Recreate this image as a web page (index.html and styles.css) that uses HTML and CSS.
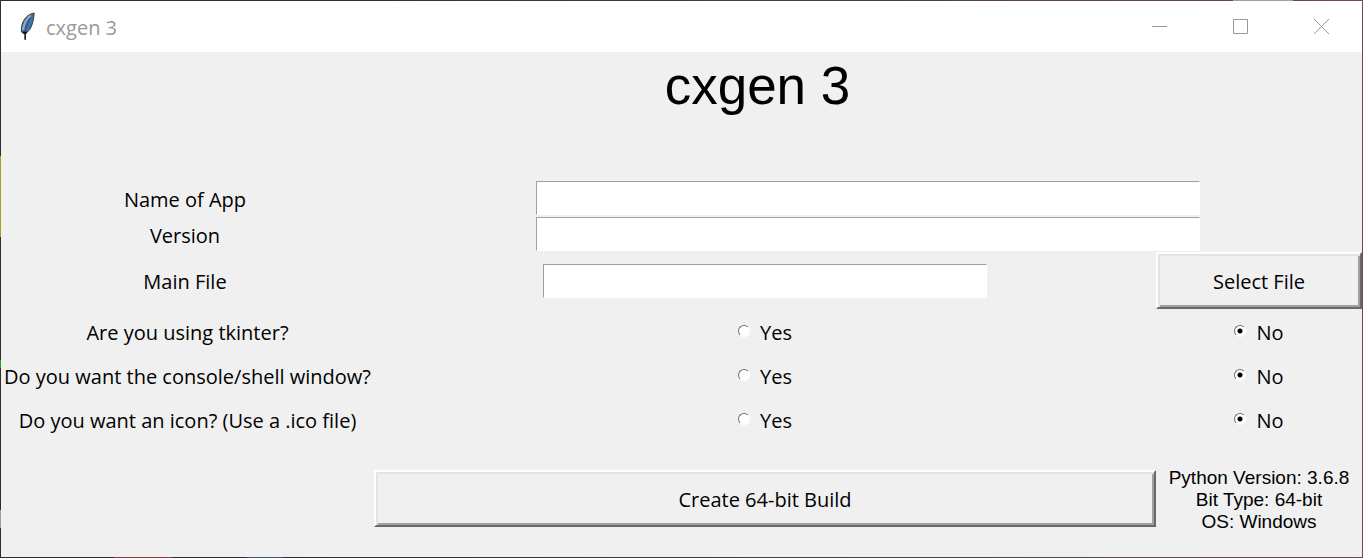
FILE: index.html
```
<!DOCTYPE html>
<html lang="en">
<head>
<meta charset="utf-8">
<title>cxgen 3</title>
<link rel="stylesheet" href="styles.css">
</head>
<body>
<div class="window">
  <header class="titlebar">
    <svg class="feather" width="16" height="30" viewBox="0 0 16 30" aria-hidden="true">
      <path d="M15.200 1C11 1.500 6 5 4 10C2.500 13.500 2 17 2.500 20L5 21.500L8.500 20C12 17 13 13 14 9C14.500 6 15.200 4 15.200 1Z" fill="#3f73b0" stroke="#3a3f45"/>
      <path d="M14 2.500C10 7 7.500 13 6 20" fill="none" stroke="#26486f" stroke-width=".8"/>
      <path d="M12 3.500C8 6 5 11 4 18" fill="none" stroke="#a3a9ad" stroke-width="2"/>
      <path d="M3.500 20L8 20L6.500 22.500V27.500H5.800V22.500Z" fill="#111" stroke="#111" stroke-width=".8"/>
    </svg>
    <span class="caption">cxgen 3</span>
    <div class="controls">
      <button class="control" type="button" aria-label="Minimize"><svg width="15" height="15" viewBox="0 0 15 15"><path d="M0 7.500H15"/></svg></button>
      <button class="control" type="button" aria-label="Maximize"><svg width="15" height="15" viewBox="0 0 15 15"><path d="M.5.5H14.500V14.500H.5Z"/></svg></button>
      <button class="control" type="button" aria-label="Close"><svg width="15" height="15" viewBox="0 0 15 15"><path d="M0 0L15 15M15 0L0 15"/></svg></button>
    </div>
  </header>
  <form class="form">
    <div class="row heading-row"><h1 class="heading">cxgen 3</h1></div>
    <div class="row entry-row">
      <label class="prompt field-prompt" for="app-name">Name of App</label>
      <input class="entry wide" id="app-name" type="text">
    </div>
    <div class="row entry-row">
      <label class="prompt field-prompt" for="version">Version</label>
      <input class="entry wide" id="version" type="text">
    </div>
    <div class="row">
      <label class="prompt field-prompt" for="main-file">Main File</label>
      <input class="entry" id="main-file" type="text">
      <button class="push" type="button">Select File</button>
    </div>
    <div class="row choice-row" role="radiogroup" aria-labelledby="q-tk">
      <span class="prompt" id="q-tk">Are you using tkinter?</span>
      <label class="choice"><input class="radio" type="radio" name="tk"><span class="prompt">Yes</span></label>
      <label class="choice"><input class="radio" type="radio" name="tk" checked><span class="prompt">No</span></label>
    </div>
    <div class="row choice-row" role="radiogroup" aria-labelledby="q-console">
      <span class="prompt" id="q-console">Do you want the console/shell window?</span>
      <label class="choice"><input class="radio" type="radio" name="console"><span class="prompt">Yes</span></label>
      <label class="choice"><input class="radio" type="radio" name="console" checked><span class="prompt">No</span></label>
    </div>
    <div class="row choice-row" role="radiogroup" aria-labelledby="q-icon">
      <span class="prompt" id="q-icon">Do you want an icon? (Use a .ico file)</span>
      <label class="choice"><input class="radio" type="radio" name="icon"><span class="prompt">Yes</span></label>
      <label class="choice"><input class="radio" type="radio" name="icon" checked><span class="prompt">No</span></label>
    </div>
    <div class="row build-row">
      <button class="push build" type="button">Create 64-bit Build</button>
      <p class="info">Python Version: 3.6.8<br>Bit Type: 64-bit<br>OS: Windows</p>
    </div>
  </form>
</div>
</body>
</html>
```

FILE: styles.css
```
* {
  box-sizing: border-box;
}

body {
  margin: 0;
  min-height: 100vh;
  padding: 1px;
  display: flex;
  background:
    linear-gradient(#a9a020, #a9a020) 0 156px / 1px 81px no-repeat,
    linear-gradient(#2ca02c, #2ca02c) 0 360px / 1px 8px no-repeat,
    linear-gradient(#a0a0a0, #a0a0a0) 0 510px / 1px 18px no-repeat,
    linear-gradient(#a0a0a0, #a0a0a0) 1233px 0 / 60px 1px no-repeat,
    linear-gradient(#a03038, #a03038) 114px 100% / 58px 1px no-repeat,
    linear-gradient(#3c5488, #3c5488) 247px 100% / 36px 1px no-repeat,
    linear-gradient(90deg, #302d30 20%, #6e4a55);
  font-family: "Open Sans", "Noto Sans", sans-serif;
  font-size: 20px;
  color: #000;
}

.window {
  flex: 1;
  display: flex;
  flex-direction: column;
  background: #f0f0f0;
}

.titlebar {
  height: 51px;
  display: flex;
  align-items: center;
  padding-left: 18px;
  background: #fff;
  color: #999;
}

.caption {
  margin-left: 11px;
  padding-top: 2px;
}

.controls {
  display: flex;
  margin-left: auto;
}

.control {
  width: 81px;
  height: 51px;
  display: grid;
  place-items: center;
  padding: 0;
  border: 0;
  background: none;
}

.control path {
  fill: none;
  stroke: #999;
}

.form {
  flex: 1;
}

.row {
  display: grid;
  grid-template-columns: 373px 1fr 206px;
  align-items: center;
  justify-items: center;
  line-height: 28px;
}

.heading-row {
  height: 128px;
  align-items: start;
}

.heading {
  grid-column: 2;
  margin: 4px 15px 0 0;
  font: 53px/60px "Liberation Sans", Arial, sans-serif;
}

.entry-row {
  height: 36px;
}

.prompt {
  padding-top: 3px;
}

.field-prompt {
  padding-right: 5px;
}

.entry {
  width: 444px;
  max-width: 100%;
  height: 34px;
  padding: 0 4px;
  border: 1px solid #fff;
  border-top-color: #a0a0a0;
  border-left-color: #a0a0a0;
  background: #fff;
  font: inherit;
}

.wide {
  grid-column: 2 / 4;
  width: 664px;
}

.push {
  width: 100%;
  height: 57px;
  padding: 3px 0 0;
  border: 2px solid;
  border-color: #fff #696969 #696969 #fff;
  box-shadow: inset 2px 2px #e3e3e3, inset -2px -2px #a0a0a0;
  background: #f0f0f0;
  font: inherit;
  color: inherit;
}

.choice-row {
  height: 44px;
}

.choice {
  display: flex;
  align-items: center;
  gap: 10px;
}

.radio {
  appearance: none;
  width: 12px;
  height: 12px;
  margin: 0;
  border: 1px solid;
  border-color: #707070 #fff #fff #707070;
  border-radius: 50%;
  background: #fff;
}

.radio:checked {
  background: radial-gradient(circle, #000 2px, #fff 3px);
}

.build-row {
  padding-top: 23px;
}

.build {
  grid-column: 2;
}

.info {
  margin: 0;
  padding-top: 3px;
  font: 19px/22px "Liberation Sans", Arial, sans-serif;
  text-align: center;
}
```
